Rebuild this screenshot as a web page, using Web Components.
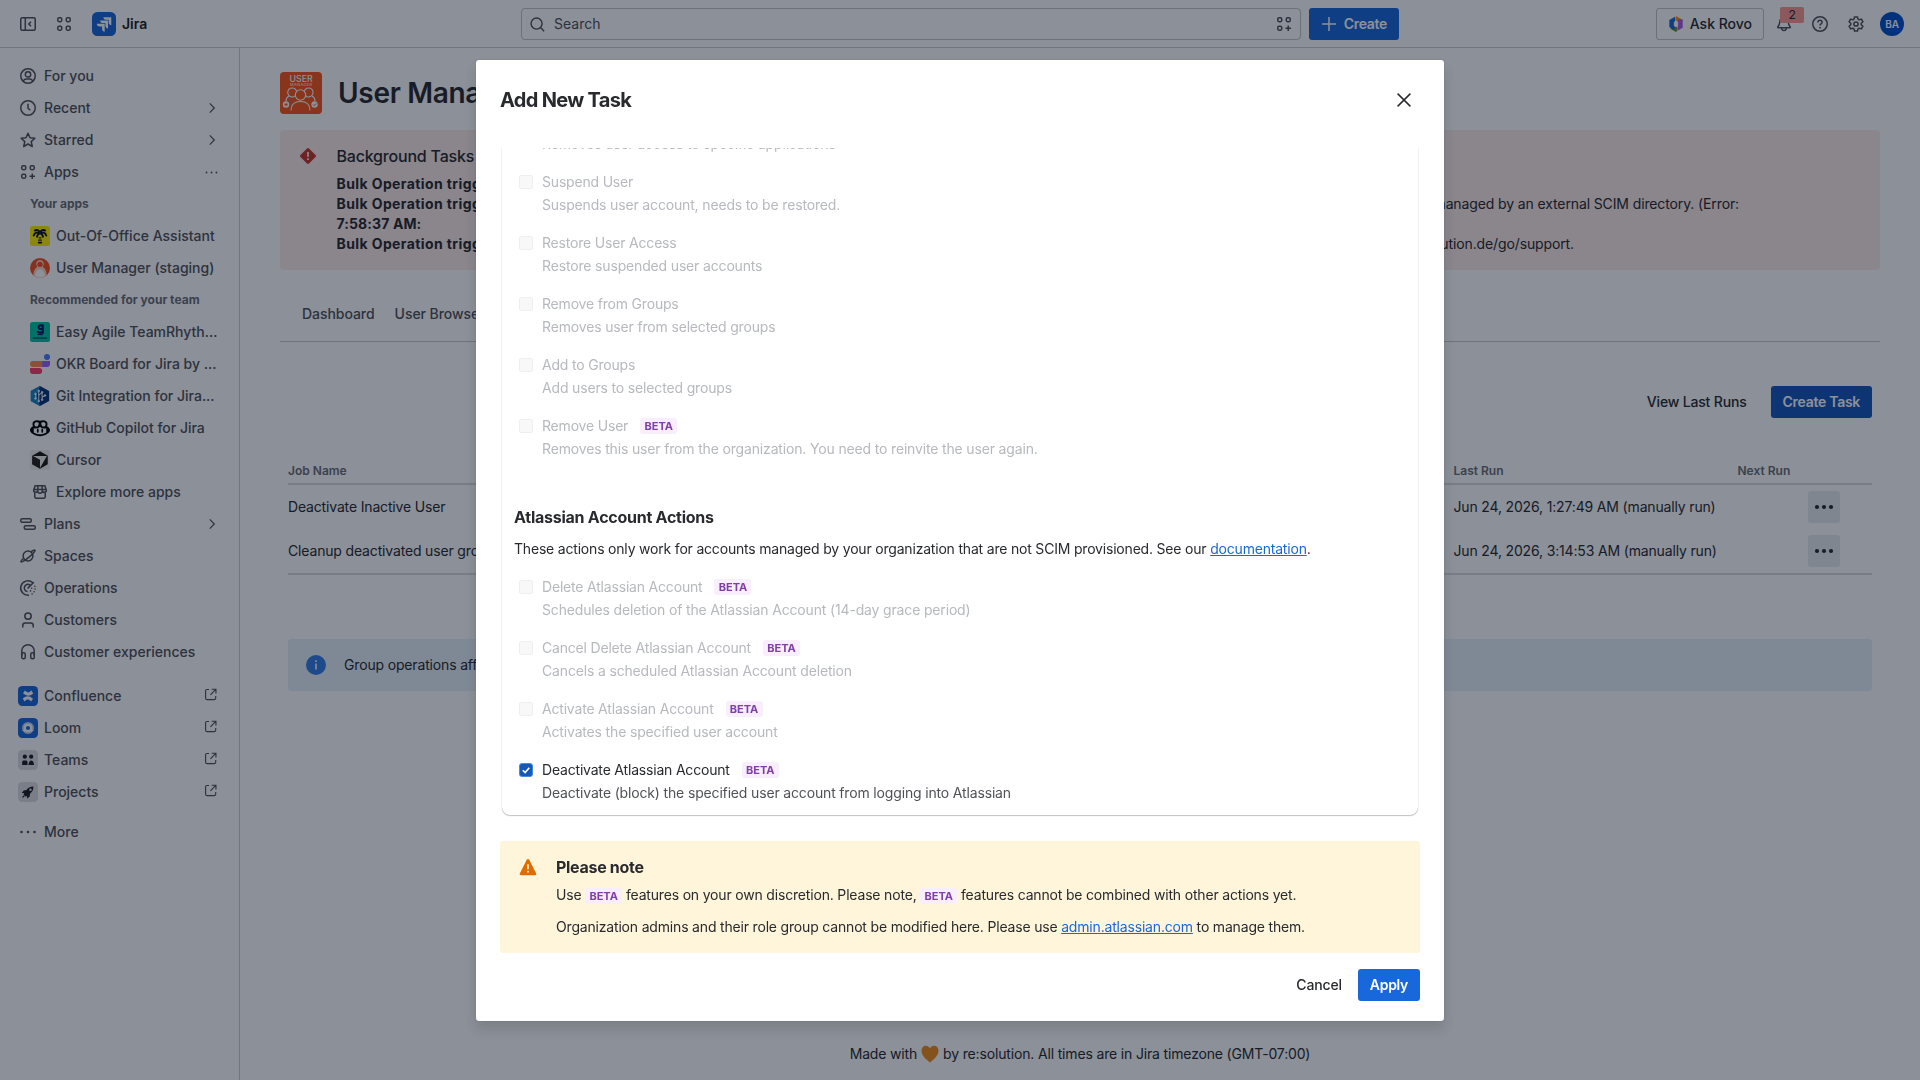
<!DOCTYPE html>
<html lang="en">
<head>
<meta charset="UTF-8">
<title>User Manager - Jira</title>
<style>
  * { box-sizing: border-box; }
  body {
    margin: 0;
    width: 1920px;
    height: 1080px;
    overflow: hidden;
    background: #fff;
    color: #292a2e;
    font-family: Inter, "Liberation Sans", sans-serif;
    font-size: 14px;
    line-height: 20px;
    letter-spacing: -0.16px;
  }
</style>
</head>
<body>
<jira-app></jira-app>
<task-dialog heading="Add New Task">
  <task-card>
    <task-option>
      <span slot="desc">Removes user access to specific applications</span>
    </task-option>
    <task-option label="Suspend User"><span slot="desc">Suspends user account, needs to be restored.</span></task-option>
    <task-option label="Restore User Access"><span slot="desc">Restore suspended user accounts</span></task-option>
    <task-option label="Remove from Groups"><span slot="desc">Removes user from selected groups</span></task-option>
    <task-option label="Add to Groups"><span slot="desc">Add users to selected groups</span></task-option>
    <task-option label="Remove User" beta><span slot="desc">Removes this user from the organization. You need to reinvite the user again.</span></task-option>
    <section-intro heading="Atlassian Account Actions">These actions only work for accounts managed by your organization that are not SCIM provisioned. See our <ui-link>documentation</ui-link>.</section-intro>
    <task-option label="Delete Atlassian Account" beta><span slot="desc">Schedules deletion of the Atlassian Account (14-day grace period)</span></task-option>
    <task-option label="Cancel Delete Atlassian Account" beta><span slot="desc">Cancels a scheduled Atlassian Account deletion</span></task-option>
    <task-option label="Activate Atlassian Account" beta><span slot="desc">Activates the specified user account</span></task-option>
    <task-option label="Deactivate Atlassian Account" beta checked><span slot="desc">Deactivate (block) the specified user account from logging into Atlassian</span></task-option>
  </task-card>
  <note-panel heading="Please note">
    <div>Use <beta-tag inline></beta-tag> features on your own discretion. Please note, <beta-tag inline></beta-tag> features cannot be combined with other actions yet.</div>
    <div>Organization admins and their role group cannot be modified here. Please use <ui-link>admin.atlassian.com</ui-link> to manage them.</div>
  </note-panel>
  <ui-button slot="footer">Cancel</ui-button>
  <ui-button slot="footer" kind="primary">Apply</ui-button>
</task-dialog>

<script>
const ICONS = {
  sidebar: `<rect x="0.75" y="1.75" width="14.5" height="12.5" rx="1.5"/><path d="M5.3 1.75v12.5M11 5.8 8.8 8l2.2 2.2"/>`,
  grid: `<rect x="1.75" y="1.75" width="4" height="4" rx="1.4"/><rect x="10.25" y="1.75" width="4" height="4" rx="1.4"/><rect x="1.75" y="10.25" width="4" height="4" rx="1.4"/><rect x="10.25" y="10.25" width="4" height="4" rx="1.4"/>`,
  apps: `<rect x="1.75" y="1.75" width="4" height="4" rx="1.4"/><rect x="10.25" y="1.75" width="4" height="4" rx="1.4"/><rect x="1.75" y="10.25" width="4" height="4" rx="1.4"/><path d="M12.25 9.5v5.5M9.5 12.25H15"/>`,
  search: `<circle cx="7" cy="7" r="5.9"/><path d="m11.2 11.2 3.9 3.9"/>`,
  person: `<circle cx="8" cy="8" r="7.25"/><circle cx="8" cy="6.4" r="2.7"/><path d="M3.2 13.2c.6-1.6 1.6-2.2 2.8-2.2h4c1.2 0 2.2.6 2.8 2.2"/>`,
  clock: `<circle cx="8" cy="8" r="7.25"/><path d="M8 3.8V8.2l2.3 2"/>`,
  star: `<path d="m8 1.300 2 4.500 4.900.5-3.700 3.300 1.100 4.900L8 12l-4.300 2.500 1.100-4.900L1.100 6.300 6 5.800z" stroke-linejoin="round"/>`,
  chevron: `<path d="m5.800 3.400 4.500 4.600-4.500 4.600"/>`,
  dots: `<g fill="currentColor" stroke="none"><circle cx="1.500" cy="8" r="1.300"/><circle cx="8" cy="8" r="1.300"/><circle cx="14.500" cy="8" r="1.300"/></g>`,
  dotsSmall: `<g fill="currentColor" stroke="none"><circle cx="1.600" cy="8" r=".95"/><circle cx="7" cy="8" r=".95"/><circle cx="12.200" cy="8" r=".95"/></g>`,
  dotsBold: `<g fill="currentColor" stroke="none"><circle cx="1" cy="8" r="2.100"/><circle cx="8" cy="8" r="2.100"/><circle cx="15" cy="8" r="2.100"/></g>`,
  plans: `<rect x=".75" y="2.750" width="10.500" height="3.500" rx="1.500"/><rect x="4.250" y="9.750" width="11" height="3.500" rx="1.500"/>`,
  planet: `<circle cx="8" cy="8" r="4.900" /><path d="M3.700 10.200C1.600 12 .6 13.300 1 13.800c.6.700 4.200-1.400 8-4.700 3.800-3.200 6.600-6.300 6-6.900-.4-.5-2 .2-4 1.400"/>`,
  radar: `<path d="M9 15.200A7.250 7.250 0 1 1 12.600 2.500M7.500 11.500A3.600 3.600 0 1 1 10 5M7.600 8.400 13.800 2.300"/><g fill="currentColor" stroke="none"><circle cx="14.800" cy="6.300" r=".8"/><circle cx="15.100" cy="9" r=".8"/><circle cx="11.700" cy="8.200" r=".8"/><circle cx="14.100" cy="11.700" r=".8"/><circle cx="10.500" cy="10.900" r=".8"/><circle cx="12.100" cy="14" r=".8"/></g>`,
  customer: `<circle cx="8" cy="4.100" r="3.200"/><path d="M2.750 15.500v-2c0-1.500 1-2.500 2.500-2.500h5.500c1.500 0 2.500 1 2.500 2.500v2"/>`,
  headset: `<path d="M1.750 12V7a6.250 6.250 0 0 1 12.500 0v5"/><rect x="1.750" y="8.750" width="3.500" height="6" rx="1.500"/><rect x="10.750" y="8.750" width="3.500" height="6" rx="1.500"/>`,
  store: `<path d="M3.200 1.750h9.600l1.500 4.200a1.900 1.900 0 0 1-3.900.8 2.100 2.100 0 0 1-4.800 0 1.900 1.900 0 0 1-3.900-.8zM5.600 6.700 6 2M10.400 6.700 10 2M2.400 5.600h11.200M2.750 8.500v4.250c0 1 .5 1.500 1.500 1.500h7.500c1 0 1.500-.5 1.500-1.500V8.500"/>`,
  external: `<path d="M6.500 2.600H4.100c-.8 0-1.350.55-1.350 1.350v8.100c0 .8.550 1.350 1.350 1.350h8.100c.8 0 1.350-.55 1.350-1.350V9.500M9.300 2.400h4.500v4.500M13.600 2.600 7.900 8.300"/>`,
  plus: `<path d="M8 1v14M1 8h14"/>`,
  bell: `<path d="M8 1.500c-2.500 0-4 1.900-4.200 4.300-.2 2.600-.6 3.600-1.900 5-.4.500-.2 1 .4 1h11.400c.6 0 .8-.5.4-1-1.300-1.400-1.700-2.400-1.900-5C12 3.400 10.500 1.500 8 1.500zM5.600 12c.2 1.700 1.100 2.600 2.400 2.600s2.200-.9 2.400-2.600"/>`,
  help: `<circle cx="8" cy="8" r="7.250"/><path d="M5.900 6.500C5.900 5.200 6.800 4.300 8 4.300s2.100.8 2.100 2c0 1.600-2.100 1.500-2.100 3.300"/><circle cx="8" cy="11.700" r=".9" fill="currentColor" stroke="none"/>`,
  gear: `<path d="m6.500.9-.5 2.200-1.200.7-2.200-.7L1.100 5.700l1.700 1.600v1.400l-1.700 1.600 1.500 2.600 2.200-.7 1.200.7.5 2.200h3l.5-2.200 1.200-.7 2.200.7 1.500-2.600-1.700-1.600V7.300l1.700-1.600-1.500-2.600-2.200.7-1.200-.7L9.500.9z" stroke-linejoin="round"/><circle cx="8" cy="8" r="2.100"/>`,
  close: `<path d="M1.600 1.600 14.400 14.400M14.400 1.600 1.600 14.400"/>`
};

// multi-colour marks, all drawn on a 24 grid
const LOGOS = {
  jira: `<rect width="24" height="24" rx="5.500" fill="#1868db"/><g fill="#fff"><path d="M11.300 5.200h8v8c-1.700-.2-2.600-1.300-2.600-3V7.800h-2.400c-1.700 0-2.800-1-3-2.600z"/><path d="M8 8.500h8v8c-1.700-.2-2.600-1.300-2.600-3v-2.400H11c-1.700 0-2.800-1-3-2.600z"/><path d="M4.700 11.800h8v8c-1.700-.2-2.600-1.300-2.600-3v-2.400H7.700c-1.700 0-2.800-1-3-2.600z"/></g>`,
  rovo: `<path fill="#fb9700" d="M12 0 21 5.200 16 10 11 6z"/><path fill="#af59e1" d="m15 5.500 7-.5v12.500L14 22z"/><path fill="#6a9a23" d="M13.500 16.500v6.300L12 24l-8.500-4.800L9 14z"/><path fill="#1868db" d="M10.500 1.200v17L8 20.500l-6-4V6z"/><path fill="#fff" d="M12 7.200 15.200 9v6L12 16.800 8.800 15V9z"/>`,
  palm: `<rect width="24" height="24" rx="3" fill="#ffef00"/><g stroke="#101418" stroke-width="2.300" stroke-linecap="round" fill="none"><path d="M12 8C10.500 5 8 4 5.800 5.500M12 8c1.500-3 4-4 6.200-2.500M12 8C9 7 5.500 8 4.500 11.500M12 8c3-1 6.500 0 7.500 3.500M12 8.500c-2 .8-3.500 2.500-3.500 4.500M12 8.500c2 .8 3.500 2.500 3.500 4.500"/></g><path fill="#101418" d="M10.500 13.500h3v1.500h-3zM10 16.300h4v1.500h-4zM9.500 19h5v2h-5z"/>`,
  manager: `<circle cx="12" cy="12" r="12" fill="#f4511e"/><path d="M4 21c0-5 2.500-9.500 5-10.500a4.600 4.600 0 1 1 6 0c2.500 1 5 5.500 5 10.500a12 12 0 0 1-16 0z" fill="#ffd3c0"/><circle cx="12" cy="7.600" r="3.200" fill="#f4511e"/><path d="M6 21.500c.5-4 2.500-8 6-8s5.500 4 6 8a11 11 0 0 1-12 0z" fill="#fff"/>`,
  easy: `<rect width="24" height="24" rx="3" fill="#00c7a8"/><path d="M15.300 3v9.700h-3.500c-1.500 0-2.600-.7-3-2M15.300 8.300h-3.200a2.200 2.200 0 0 1 0-4.300h3.200" stroke="#0b1466" stroke-width="2.500" fill="none"/><path d="M9 15.200h6.500" stroke="#0b1466" stroke-width="1.200"/><rect x="3.500" y="18.500" width="17" height="1.600" fill="#0d5560"/>`,
  okr: `<circle cx="20.400" cy="3.700" r="3.600" fill="#4c7dff"/><path d="M4 8.500h10.500v7H3.500a3.500 3.500 0 0 1 0-7z" fill="#ff8a4c"/><path d="M14.500 8.500H24V12a3.500 3.500 0 0 1-3.500 3.500h-6z" fill="#9c62f5"/><path d="M0 16.800h11a3.600 3.600 0 0 1 0 7.200H3.500A3.500 3.500 0 0 1 0 20.500z" fill="#f8416c"/>`,
  git: `<path d="M12 0 23 6v12l-11 6L1 18V6z" fill="#06357f"/><path d="M12 0 1 6v12l11 6-4-12z" fill="#1488c8"/><g stroke="#fff" stroke-width="1.200" fill="#fff"><path d="M10.500 6v12M10.500 11l4-3M14.500 8v8M7 10v5M14.500 13.500l4-2" fill="none"/><circle cx="10.500" cy="5.800" r=".9"/><circle cx="10.500" cy="18.200" r=".9"/><circle cx="6.500" cy="9.500" r=".9"/><circle cx="6.500" cy="15" r=".9"/><circle cx="14.500" cy="7.500" r=".9"/><circle cx="14.500" cy="16.500" r=".9"/><circle cx="18" cy="11.300" r=".9"/></g>`,
  copilot: `<path fill="#000" d="M12 3.200C7.500 1.700 3 3 3 7c0 1.300.2 2.200.6 3C1.500 11 0 13 0 14.800c0 3 5.800 7 12 7s12-4 12-7C24 13 22.500 11 20.400 10c.4-.8.6-1.700.6-3 0-4-4.500-5.300-9-3.800z"/><path fill="#fff" d="M10.500 5.600C8 4.600 5.300 4.800 5.300 7.500c0 2 .9 2.700 2.500 2.700 2 0 2.700-1.700 2.700-4.600zM13.500 5.600c2.500-1 5.200-.8 5.200 1.900 0 2-.9 2.700-2.500 2.700-2 0-2.700-1.700-2.700-4.600zM4.500 12.200c2.500.8 6 .3 7.500-1.700 1.500 2 5 2.500 7.500 1.700v5.300c-4 2.800-11 2.800-15 0z"/><path d="M9.300 13.500v3.300M14.700 13.500v3.300" stroke="#000" stroke-width="2" stroke-linecap="round"/>`,
  cursor: `<rect width="24" height="24" rx="3" fill="#f1f1ef"/><path d="m12 1.500 9.300 5.300v10.400L12 22.500l-9.300-5.300V6.800z" fill="#1b1913"/><path d="M3.300 7.300h17L12 21.500v-9.500z" fill="#f1f1ef"/><path d="M3.300 7.300 12 12v10L2.700 17.200z" fill="#25221c"/>`,
  confluence: `<rect width="24" height="24" rx="5" fill="#1868db"/><path fill="#fff" d="M6 8.700 8.300 5.300c3.500 3.100 4.700 3.100 7.800.2L18.300 9c-4.500 3.600-7.800 3.600-12.300-.3zM18 15.300l-2.300 3.400c-3.500-3.100-4.700-3.100-7.800-.2L5.700 15c4.500-3.600 7.800-3.600 12.300.3z"/>`,
  loom: `<rect width="24" height="24" rx="5" fill="#1868db"/><g stroke="#fff" stroke-width="1.700"><path d="M12 4.800v14.400M4.800 12h14.400M6.900 6.900l10.200 10.200M17.100 6.900 6.900 17.100M9.200 5.300l5.600 13.400M14.800 5.300 9.200 18.700M5.300 9.200l13.400 5.600M5.300 14.800l13.400-5.600"/></g><circle cx="12" cy="12" r="3.600" fill="#1868db" stroke="#fff" stroke-width="2.200"/>`,
  teams: `<rect width="24" height="24" rx="5" fill="#dddee1"/><g fill="#1c1e24"><circle cx="8.200" cy="8" r="2.500"/><circle cx="15.800" cy="8" r="2.500"/><path d="M5 18v-3.500c0-1.300.8-2 2-2h2.400c1.200 0 2 .7 2 2V18zM12.600 18c.3-3.500 1.500-5.500 3.200-5.500 2 0 3.400 2 3.400 5.500z"/></g>`,
  projects: `<rect width="24" height="24" rx="5" fill="#dddee1"/><path fill="#1c1e24" fill-rule="evenodd" d="M18.500 5.500c-4 0-6.500 1.500-8.300 4.200l-3.400.5-2.300 3 3 .4-.7 1.800 2 2 1.800-.7.4 3 3-2.300.4-3.400c2.700-1.800 4.100-4.500 4.100-8.500zM15 7.700a1.500 1.500 0 1 1 0 3 1.500 1.500 0 0 1 0-3z"/><path d="m7.500 16.500-2 2" stroke="#1c1e24" stroke-width="1.500"/>`
};

class UiIcon extends HTMLElement {
  connectedCallback() {
    const shadow = this.attachShadow({ mode: "open" });
    const name = this.getAttribute("name");
    const size = this.getAttribute("size") || 16;
    const logo = LOGOS[name];
    shadow.innerHTML = `
      <style>
        :host { display: inline-flex; flex: none; }
        svg { display: block; width: ${size}px; height: ${size}px; overflow: visible; }
      </style>
      <svg viewBox="${logo ? "0 0 24 24" : "0 0 16 16"}" fill="none"
        ${logo ? "" : `stroke="currentColor" stroke-width="${this.getAttribute("weight") || 1.5}"`}>${logo || ICONS[name]}</svg>
    `;
  }
}
customElements.define("ui-icon", UiIcon);

// no whitespace around the anchor, it sits inside running text
class UiLink extends HTMLElement {
  connectedCallback() {
    this.attachShadow({ mode: "open" }).innerHTML = `<style>
        :host { display: inline; }
        a { color: #1868db; text-decoration: underline; cursor: pointer; }
      </style><a><slot></slot></a>`;
  }
}
customElements.define("ui-link", UiLink);

class UiButton extends HTMLElement {
  connectedCallback() {
    this.attachShadow({ mode: "open" }).innerHTML = `
      <style>
        :host { display: inline-flex; flex: none; }
        button {
          display: flex;
          align-items: center;
          gap: 7px;
          height: 32px;
          padding: 0 12px;
          border: 0;
          border-radius: 3px;
          background: transparent;
          color: #292a2e;
          font: 500 14px/20px Inter, sans-serif;
          letter-spacing: -0.17px;
          white-space: nowrap;
        }
        :host([kind="primary"]) button { background: #1868db; color: #fff; font-weight: 600; letter-spacing: -0.3px; }
        :host([kind="strong"]) button { background: #1558bc; color: #fff; font-weight: 600; letter-spacing: -0.28px; }
        :host([kind="outline"]) button { border: 1px solid rgba(11, 18, 14, .24); padding: 0 11px; gap: 6px; letter-spacing: 0; }
        :host([kind="menu"]) button { width: 32px; padding: 0; justify-content: center; background: #e8ecf0; }
      </style>
      <button><slot></slot></button>
    `;
  }
}
customElements.define("ui-button", UiButton);

class BetaTag extends HTMLElement {
  connectedCallback() {
    this.attachShadow({ mode: "open" }).innerHTML = `<style>
        :host {
          display: inline-flex;
          align-items: center;
          justify-content: center;
          width: 37px;
          height: 16px;
          border-radius: 3px;
          background: #f8eefe;
          color: #803fa5;
          font-size: 11px;
          font-weight: 700;
          line-height: 16px;
          letter-spacing: 0;
        }
      </style><span>BETA</span>`;
  }
}
customElements.define("beta-tag", BetaTag);

class AppHeader extends HTMLElement {
  connectedCallback() {
    this.attachShadow({ mode: "open" }).innerHTML = `
      <style>
        :host { display: block; flex: none; }
        header {
          display: grid;
          grid-template-columns: 521px 878px 1fr;
          align-items: center;
          height: 48px;
          border-bottom: 1px solid rgba(11, 18, 14, .2);
          box-sizing: border-box;
          color: #505258;
        }
        .left, .center, .right { display: flex; align-items: center; }
        .left { padding-left: 20px; gap: 20px; }
        .brand { display: flex; align-items: center; gap: 6px; color: #1e1f21; font-weight: 600; letter-spacing: 0; }
        .center { gap: 8px; padding-top: 1px; }
        .search {
          display: flex;
          align-items: center;
          gap: 9px;
          width: 780px;
          height: 32px;
          padding: 0 8px;
          box-sizing: border-box;
          border: 1px solid rgba(11, 18, 14, .24);
          border-radius: 4px;
          letter-spacing: 0;
        }
        .search span { flex: 1; }
        .right { justify-content: flex-end; padding: 1px 12px 0 0; gap: 4px; }
        .tool { position: relative; display: flex; align-items: center; justify-content: center; width: 32px; height: 32px; }
        .badge {
          position: absolute;
          top: -1px;
          left: 12px;
          width: 24px;
          height: 16px;
          border-radius: 2px;
          background: #fd9891;
          color: #292a2e;
          font-size: 12px;
          line-height: 15px;
          text-align: center;
        }
        .avatar {
          width: 24px;
          height: 24px;
          border-radius: 50%;
          background: #0052cc;
          color: #fff;
          font-size: 10px;
          font-weight: 600;
          line-height: 24px;
          text-align: center;
        }
      </style>
      <header>
        <div class="left">
          <ui-icon name="sidebar"></ui-icon>
          <ui-icon name="grid"></ui-icon>
          <div class="brand"><ui-icon name="jira" size="24"></ui-icon>Jira</div>
        </div>
        <div class="center">
          <div class="search"><ui-icon name="search" size="15"></ui-icon><span>Search</span><ui-icon name="apps"></ui-icon></div>
          <ui-button kind="primary"><ui-icon name="plus"></ui-icon>Create</ui-button>
        </div>
        <div class="right">
          <ui-button kind="outline"><ui-icon name="rovo"></ui-icon>Ask Rovo</ui-button>
          <div class="tool"><ui-icon name="bell"></ui-icon><span class="badge">2</span></div>
          <div class="tool"><ui-icon name="help"></ui-icon></div>
          <div class="tool"><ui-icon name="gear"></ui-icon></div>
          <div class="tool"><span class="avatar">BA</span></div>
        </div>
      </header>
    `;
  }
}
customElements.define("app-header", AppHeader);

class NavItem extends HTMLElement {
  connectedCallback() {
    const shadow = this.attachShadow({ mode: "open" });
    const icon = this.getAttribute("icon");
    const end = this.getAttribute("end");
    const size = LOGOS[icon] ? 20 : 16;
    shadow.innerHTML = `
      <style>
        :host { display: block; }
        .row { display: flex; align-items: center; height: 32px; padding: 0 20px 0 6px; font-weight: 500; color: #505258; letter-spacing: 0; }
        .icon { display: flex; justify-content: center; flex: none; width: 20px; margin-right: 6px; }
        .label { flex: 1; min-width: 0; overflow: hidden; text-overflow: ellipsis; white-space: nowrap; }
        :host([nested]) .row { padding: 0 10px 0 18px; }
        .end { display: flex; margin-right: -1px; }
        :host([end="external"]) .end { margin: -4px 1px 0 0; }
      </style>
      <div class="row">
        <span class="icon"><ui-icon name="${icon}" size="${size}"></ui-icon></span>
        <span class="label"><slot></slot></span>
        ${end ? `<span class="end"><ui-icon name="${end}" size="${end === "chevron" ? 16 : 15}" weight="1.2"></ui-icon></span>` : ""}
      </div>
    `;
  }
}
customElements.define("nav-item", NavItem);

class SideNav extends HTMLElement {
  connectedCallback() {
    this.attachShadow({ mode: "open" }).innerHTML = `
      <style>
        :host { display: block; flex: none; width: 240px; box-sizing: border-box; border-right: 1px solid rgba(11, 18, 14, .2); padding: 12px 0 0 12px; }
        h3 { margin: 0; padding-left: 18px; font-size: 12px; font-weight: 650; line-height: 32px; color: #6b6e76; letter-spacing: 0; }
        .products { margin: 12px 0 8px; }
      </style>
      <nav>
        <nav-item icon="person">For you</nav-item>
        <nav-item icon="clock" end="chevron">Recent</nav-item>
        <nav-item icon="star" end="chevron">Starred</nav-item>
        <nav-item icon="apps" end="dotsSmall">Apps</nav-item>
        <h3>Your apps</h3>
        <nav-item nested icon="palm">Out-Of-Office Assistant</nav-item>
        <nav-item nested icon="manager">User Manager (staging)</nav-item>
        <h3>Recommended for your team</h3>
        <nav-item nested icon="easy">Easy Agile TeamRhyth...</nav-item>
        <nav-item nested icon="okr">OKR Board for Jira by ...</nav-item>
        <nav-item nested icon="git">Git Integration for Jira...</nav-item>
        <nav-item nested icon="copilot">GitHub Copilot for Jira</nav-item>
        <nav-item nested icon="cursor">Cursor</nav-item>
        <nav-item nested icon="store">Explore more apps</nav-item>
        <nav-item icon="plans" end="chevron">Plans</nav-item>
        <nav-item icon="planet">Spaces</nav-item>
        <nav-item icon="radar">Operations</nav-item>
        <nav-item icon="customer">Customers</nav-item>
        <nav-item icon="headset">Customer experiences</nav-item>
        <div class="products">
          <nav-item icon="confluence" end="external">Confluence</nav-item>
          <nav-item icon="loom" end="external">Loom</nav-item>
          <nav-item icon="teams" end="external">Teams</nav-item>
          <nav-item icon="projects" end="external">Projects</nav-item>
        </div>
        <nav-item icon="dots">More</nav-item>
      </nav>
    `;
  }
}
customElements.define("side-nav", SideNav);

class TaskPage extends HTMLElement {
  connectedCallback() {
    this.attachShadow({ mode: "open" }).innerHTML = `
      <style>
        :host { display: flex; flex-direction: column; flex: 1; min-width: 0; padding: 24px 40px 0; box-sizing: border-box; }
        .title { display: flex; align-items: center; gap: 16px; height: 42px; }
        .title svg { flex: none; width: 42px; height: 42px; }
        h1 { margin: 0; font-size: 28px; font-weight: 600; line-height: 32px; letter-spacing: -0.3px; }
        .alert { display: flex; height: 140px; margin-top: 16px; padding: 16px 20px; box-sizing: border-box; gap: 20.5px; border-radius: 4px; background: #fcece9; }
        .alert > svg { flex: none; width: 16px; height: 16px; margin-top: 2px; }
        .alert > div { flex: 1; }
        .alert h2 { margin: 0 0 8px; font-size: 16px; font-weight: 500; line-height: 20px; letter-spacing: -0.2px; }
        .line { display: flex; justify-content: space-between; white-space: nowrap; letter-spacing: -0.12px; }
        .line b { font-weight: 700; letter-spacing: .4px; }
        .line b.time { letter-spacing: .1px; }
        .line.first span { padding-right: 121px; }
        .line.last span { padding-right: 286px; }
        .tabs { display: flex; gap: 20px; margin-top: 24px; padding: 10px 22px 17px; border-bottom: 1px solid rgba(11, 18, 14, .22); color: #505258; font-weight: 500; letter-spacing: -0.05px; }
        .toolbar { display: flex; justify-content: flex-end; gap: 12px; margin: 44px 8px 0; }
        .grid { margin: 42px 8px 0; border-bottom: 2px solid rgba(11, 18, 14, .15); }
        .row { display: grid; grid-template-columns: 1165.5px 284px 70.5px 1fr; align-items: center; height: 44px; }
        .head { height: 25px; padding-bottom: 2px; border-bottom: 2px solid rgba(11, 18, 14, .15); box-sizing: border-box; font-size: 12px; font-weight: 600; color: #6b6e76; letter-spacing: 0; }
        .info { display: flex; align-items: center; gap: 18px; height: 52px; margin: 64px 8px 0; padding-left: 18px; box-sizing: border-box; border-radius: 3px; background: #e8f3fc; }
        .info svg { width: 20px; height: 20px; }
        footer { display: flex; justify-content: center; align-items: center; gap: 4px; margin-top: auto; padding-bottom: 16px; }
        footer svg { width: 18px; height: 18px; margin-top: -1px; }
      </style>
      <div class="title">
        <svg viewBox="0 0 42 42">
          <rect width="42" height="42" rx="4" fill="#f9551a"/>
          <text x="21" y="9.5" text-anchor="middle" font-family="Inter" font-size="8.8" font-weight="500" fill="#fff" textLength="23">USER</text>
          <text x="21" y="14.2" text-anchor="middle" font-family="Inter" font-size="4" fill="#fff" textLength="22">MANAGER</text>
          <g fill="none" stroke="#fff" stroke-width="1.1"><circle cx="20.5" cy="23" r="5.2" fill="#f9551a"/><path d="M11 38.5c0-6 3.500-9 9.500-9s9.500 3 9.500 9M15 24a4.500 4.500 0 1 1 1.500-5M25.800 24a4.500 4.500 0 1 0-1.500-5M6 29c0-2 1-4 3-5M35 29c0-2-1-4-3-5"/></g>
          <circle cx="6" cy="32.5" r="3.2" fill="#fff"/><circle cx="34.5" cy="32.5" r="3.2" fill="#fff"/>
          <path d="M4.500 31.500h3v2h-3z" fill="#f9551a"/><path d="m33 32.500 1.200 1.200 2-2.200" fill="none" stroke="#f9551a"/>
        </svg>
        <h1>User Mana</h1>
      </div>
      <div class="alert">
        <svg viewBox="0 0 16 16"><path d="M7 .5a1.400 1.400 0 0 1 2 0L15.500 7a1.400 1.400 0 0 1 0 2L9 15.500a1.400 1.400 0 0 1-2 0L.5 9a1.400 1.400 0 0 1 0-2z" fill="#c9372c"/><path d="M8 4v4.700M8 10.200v1.700" stroke="#fff" stroke-width="1.600"/></svg>
        <div>
          <h2>Background Tasks</h2>
          <div class="line"><b>Bulk Operation triggered</b></div>
          <div class="line first"><b>Bulk Operation triggered</b><span>managed by an external SCIM directory. (Error:</span></div>
          <div class="line"><b class="time">7:58:37 AM:</b></div>
          <div class="line last"><b>Bulk Operation triggered</b><span>resolution.de/go/support.</span></div>
        </div>
      </div>
      <div class="tabs"><span>Dashboard</span><span>User Browser</span></div>
      <div class="toolbar"><ui-button>View Last Runs</ui-button><ui-button kind="strong">Create Task</ui-button></div>
      <div class="grid">
        <div class="row head"><span>Job Name</span><span>Last Run</span><span>Next Run</span></div>
        <div class="row"><span>Deactivate Inactive User</span><span>Jun 24, 2026, 1:27:49 AM (manually run)</span><span></span><ui-button kind="menu"><ui-icon name="dotsBold"></ui-icon></ui-button></div>
        <div class="row"><span>Cleanup deactivated user groups</span><span>Jun 24, 2026, 3:14:53 AM (manually run)</span><span></span><ui-button kind="menu"><ui-icon name="dotsBold"></ui-icon></ui-button></div>
      </div>
      <div class="info">
        <svg viewBox="0 0 20 20"><circle cx="10" cy="10" r="10" fill="#357de8"/><path d="M10 8.500v6M10 5.200v1.800" stroke="#e9f2fe" stroke-width="1.700"/></svg>
        Group operations affect
      </div>
      <footer>
        Made with
        <svg viewBox="0 0 18 18"><path d="M9 17.500C4 13.500.5 10 .5 5.700.500 2.800 2.500.8 4.900.8 6.700.8 8.200 1.800 9 3.500 9.800 1.800 11.300.8 13.100.8c2.400 0 4.400 2 4.400 4.900 0 4.300-3.500 7.800-8.500 11.800z" fill="#f18f1c"/></svg>
        by re:solution. All times are in Jira timezone (GMT-07:00)
      </footer>
    `;
  }
}
customElements.define("task-page", TaskPage);

class JiraApp extends HTMLElement {
  connectedCallback() {
    this.attachShadow({ mode: "open" }).innerHTML = `
      <style>
        :host { display: flex; flex-direction: column; height: 1080px; }
        main { display: flex; flex: 1; min-height: 0; }
      </style>
      <app-header></app-header>
      <main><side-nav></side-nav><task-page></task-page></main>
    `;
  }
}
customElements.define("jira-app", JiraApp);

class TaskOption extends HTMLElement {
  connectedCallback() {
    const checked = this.hasAttribute("checked");
    const label = this.getAttribute("label");
    this.attachShadow({ mode: "open" }).innerHTML = `
      <style>
        :host { display: block; margin-bottom: 18px; padding-left: 5px; color: #b7b9be; }
        :host([checked]) { color: #292a2e; margin-bottom: 0; }
        .top { display: flex; align-items: center; height: 20px; margin-bottom: 3px; letter-spacing: -0.19px; }
        .box { flex: none; width: 14px; height: 14px; margin-right: 9px; box-sizing: border-box; border: 1px solid #efeff0; border-radius: 2px; background: #f8f8f8; }
        svg { display: block; flex: none; width: 14px; height: 14px; margin-right: 9px; }
        beta-tag { margin-left: 12px; }
        .desc { padding-left: 23px; }
        :host([checked]) .desc { color: #505258; }
      </style>
      ${label ? `<div class="top">
        ${checked
          ? `<svg viewBox="0 0 14 14"><rect x=".5" y=".5" width="13" height="13" rx="2.5" fill="#1558bc" stroke="#4688ec"/><path d="m3.800 7.200 2.300 2.300 4.200-4.700" fill="none" stroke="#fff" stroke-width="1.600"/></svg>`
          : `<span class="box"></span>`}
        <span>${label}</span>
        ${this.hasAttribute("beta") ? `<beta-tag></beta-tag>` : ""}
      </div>` : ""}
      <div class="desc"><slot name="desc"></slot></div>
    `;
  }
}
customElements.define("task-option", TaskOption);

class SectionIntro extends HTMLElement {
  connectedCallback() {
    this.attachShadow({ mode: "open" }).innerHTML = `
      <style>
        :host { display: block; margin: 46px 0 18px; letter-spacing: -0.193px; }
        h4 { margin: 0 0 10px; font-size: 16px; font-weight: 650; line-height: 24px; letter-spacing: -0.25px; }
      </style>
      <h4>${this.getAttribute("heading")}</h4>
      <div><slot></slot></div>
    `;
  }
}
customElements.define("section-intro", SectionIntro);

class TaskCard extends HTMLElement {
  connectedCallback() {
    this.attachShadow({ mode: "open" }).innerHTML = `
      <style>
        :host {
          display: block;
          margin: 0 2px 26px;
          padding: 0 12px 12px;
          border-radius: 8px;
          background: #fff;
          box-shadow: 0 0 1px rgba(30, 31, 33, .31), 0 1px 1px rgba(30, 31, 33, .25);
        }
      </style>
      <slot></slot>
    `;
  }
}
customElements.define("task-card", TaskCard);

class NotePanel extends HTMLElement {
  connectedCallback() {
    this.attachShadow({ mode: "open" }).innerHTML = `
      <style>
        :host { display: flex; gap: 20px; padding: 16px 20px; border-radius: 3px; background: #fff5db; letter-spacing: -0.18px; }
        svg { flex: none; width: 16px; height: 16px; margin-top: 2px; overflow: visible; }
        h4 { margin: 0 0 8px; font-size: 16px; font-weight: 650; line-height: 20px; letter-spacing: -0.3px; }
        .text { display: flex; flex-direction: column; gap: 12px; }
        ::slotted(div) { height: 20px; white-space: nowrap; }
      </style>
      <svg viewBox="0 0 16 16"><path d="M6.900.6a1.300 1.300 0 0 1 2.200 0l7 13.600c.5 1-.1 2-1.200 2H1.100c-1.100 0-1.700-1-1.200-2z" fill="#e06c00"/><path d="M8 5.200v5M8 11.700v1.800" stroke="#fff5db" stroke-width="1.600"/></svg>
      <div>
        <h4>${this.getAttribute("heading")}</h4>
        <div class="text"><slot></slot></div>
      </div>
    `;
  }
}
customElements.define("note-panel", NotePanel);

class TaskDialog extends HTMLElement {
  connectedCallback() {
    this.attachShadow({ mode: "open" }).innerHTML = `
      <style>
        :host {
          position: fixed;
          inset: 0;
          z-index: 10;
          display: flex;
          justify-content: center;
          align-items: flex-start;
          padding-top: 60px;
          background: rgba(5, 12, 31, .46);
        }
        section {
          display: flex;
          flex-direction: column;
          width: 968px;
          height: 961px;
          border-radius: 3px;
          background: #fff;
          box-shadow: 0 8px 12px rgba(30, 31, 33, .15), 0 0 1px rgba(30, 31, 33, .31);
        }
        header { display: flex; flex: none; align-items: center; justify-content: space-between; height: 88px; padding: 0 32px 8px 24px; box-sizing: border-box; }
        h2 { margin: 0; font-size: 20px; font-weight: 650; line-height: 24px; letter-spacing: -0.68px; }
        .body { display: flex; flex: 1; flex-direction: column; justify-content: flex-end; min-height: 0; padding: 0 24px; overflow: hidden; }
        footer { display: flex; flex: none; justify-content: flex-end; gap: 4px; height: 68px; padding: 16px 24px 0; box-sizing: border-box; }
      </style>
      <section>
        <header><h2>${this.getAttribute("heading")}</h2><ui-icon name="close"></ui-icon></header>
        <div class="body"><slot></slot></div>
        <footer><slot name="footer"></slot></footer>
      </section>
    `;
  }
}
customElements.define("task-dialog", TaskDialog);
</script>
</body>
</html>
